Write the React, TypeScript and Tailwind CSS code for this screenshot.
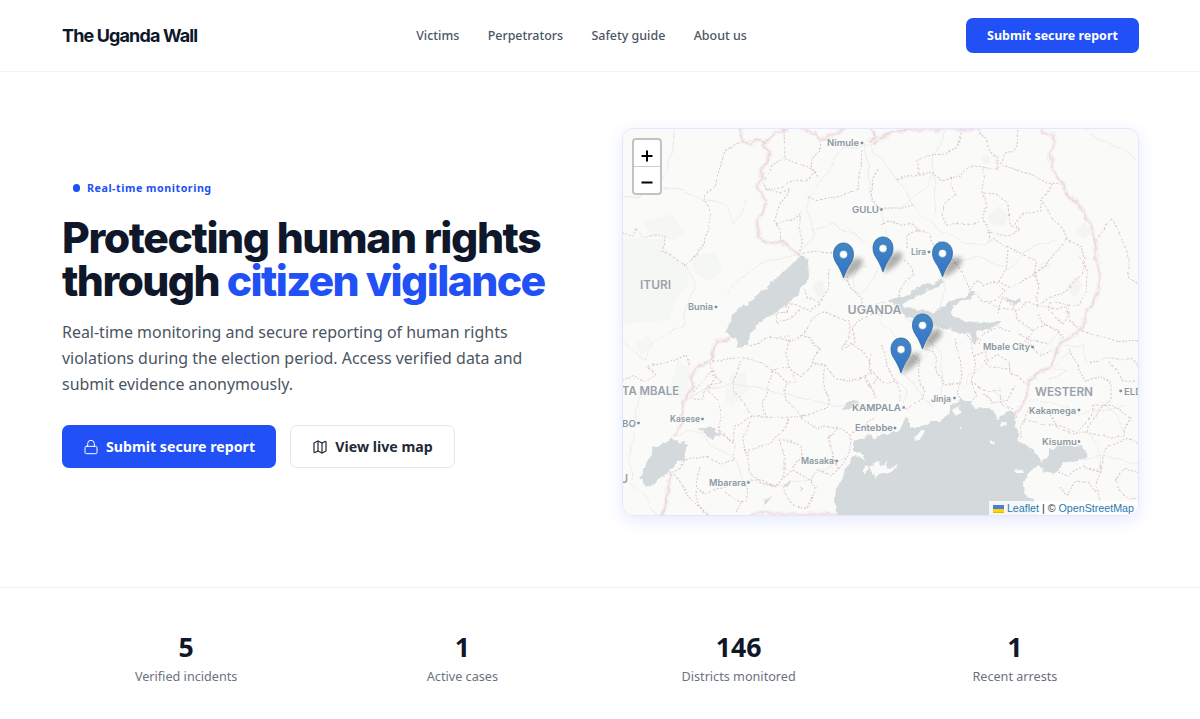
import React from 'react';
import { Lock, Map } from 'lucide-react';

const navLinks = ['Victims', 'Perpetrators', 'Safety guide', 'About us'];

const stats = [
  { value: '5', label: 'Verified incidents' },
  { value: '1', label: 'Active cases' },
  { value: '146', label: 'Districts monitored' },
  { value: '1', label: 'Recent arrests' },
];

const pins = [
  { x: 883, y: 272 },
  { x: 843.5, y: 278 },
  { x: 942.5, y: 277 },
  { x: 922.5, y: 349 },
  { x: 901, y: 373 },
];

// x is the left edge of the label, w the width it takes on the map
const places = [
  { name: 'Nimule', x: 827, y: 146, w: 32, size: 9, dot: [862, 143] },
  { name: 'GULU', x: 852, y: 213, w: 27, size: 9.5, dot: [881.5, 209.5] },
  { name: 'Lira', x: 911, y: 255, w: 15, size: 9, dot: [929, 252] },
  { name: 'Bunia', x: 688, y: 310, w: 25, size: 9, dot: [716, 307] },
  { name: 'Mbale City', x: 983, y: 350, w: 47, size: 9, dot: [1032.5, 347] },
  { name: 'Jinja', x: 931, y: 402, w: 20, size: 9, dot: [954.5, 398] },
  { name: 'KAMPALA', x: 852, y: 410.5, w: 49, size: 9.5, dot: [903.7, 407.5] },
  { name: 'Entebbe', x: 855, y: 431, w: 38, size: 9, dot: [895, 428] },
  { name: 'Kasese', x: 670, y: 422, w: 30, size: 9, dot: [702.5, 419] },
  { name: 'BO', x: 622, y: 426.5, w: 14, size: 9.5, dot: [638.5, 423] },
  { name: 'Masaka', x: 801, y: 463.5, w: 33, size: 9, dot: [836.7, 461] },
  { name: 'Mbarara', x: 709, y: 485.5, w: 37, size: 9, dot: [748.5, 482.5] },
  { name: 'Kakamega', x: 1029, y: 413.5, w: 47, size: 9, dot: [1079, 410] },
  { name: 'Kisumu', x: 1042, y: 444.5, w: 35, size: 9, dot: [1079, 441.5] },
  { name: 'ELD', x: 1124, y: 395, w: 18, size: 9.5, dot: [1120.7, 391] },
];

const regions = [
  { name: 'ITURI', x: 640, y: 289, w: 31 },
  { name: 'UGANDA', x: 847.5, y: 313.5, w: 54 },
  { name: 'TA MBALE', x: 622, y: 395, w: 57 },
  { name: 'WESTERN', x: 1035, y: 396, w: 58 },
  { name: 'U', x: 620, y: 482.5, w: 8 },
];

const countryBorders = [
  'M741 128L741 141L752 143L758 140L763 145L771 152L768 160L762 171L760 183L758 189L766 200L764 210L757 222L757 235L765 241L772 243L781 242L791 250L799 255',
  'M763 145L771 137L782 131L787 128',
  'M800 128L812 133L820 139L830 136L840 131L846 128',
  'M874 143L881 138L894 131L910 129L980 129',
  'M870 144L872 140L876 136L874 132L868 128',
  'M1040 128L1049 135L1054 136L1054 148L1050 153L1052 164L1056 177L1063 183L1067 196L1078 203L1084 214L1091 225L1095 240L1097 260L1099 274L1099 287L1095 301L1084 315L1084 325L1077 334L1061 341L1056 353L1049 368L1038 373L1027 384L1028 393L1022 405L1016 417',
  'M731 338L716 341L714 350L710 361L694 367L691 390L684 402L682 421L673 438',
  'M671 471L668 488L666 505L662 516',
  'M748 514L841 514',
];

const districts = [
  'M738 143L727 151L720 169L716 184L708 193L705 200L710 214L711 229L704 245L698 251L687 266',
  'M622 235L633 237L636 226L643 236L664 236L663 251L674 259L687 267',
  'M784 132L785 157L799 163L815 172L818 179',
  'M784 157L771 170L763 183L765 192L791 190L776 209L773 219L780 231L781 242',
  'M765 192L781 187L807 178L815 173',
  'M816 132L820 150L813 158L812 172',
  'M776 225L793 221L804 210M800 216L800 254',
  'M861 150L860 169L857 190L848 193L818 201L807 196',
  'M878 170L871 193L880 208L898 208L914 204',
  'M962 130L957 148L937 155L918 161L918 174L896 181M918 174L932 171L941 182L962 176L968 168L983 167L998 170L998 157L989 147L979 130',
  'M1018 130L1015 150L1004 153L1000 164L1014 170L1031 174L1047 183L1063 184',
  'M983 169L984 194L985 206L982 220L987 231L991 242M985 193L996 194L1009 203L1010 223L1020 231L1001 235L986 234',
  'M951 179L954 195L944 204L940 215L948 223L978 222',
  'M1051 184L1042 200L1040 212L1023 213L1016 224L1021 232M1042 200L1054 221L1068 237L1052 258L1037 274L1036 301',
  'M1067 237L1080 246L1087 259L1081 274L1067 288L1052 296L1036 304',
  'M994 239L1010 248L1035 259L1037 280',
  'M1100 236L1104 224L1110 219L1120 233L1126 256L1131 277L1139 287',
  'M1035 304L1058 309L1078 306L1087 290L1088 272L1080 254',
  'M881 226L888 221L910 224L918 231L929 234L935 246',
  'M907 248L907 235L919 230M903 262L913 272L905 284L899 300',
  'M939 240L954 260L964 275L970 291L982 301L997 299L1004 292L996 282L984 286L977 279L970 291',
  'M1009 250L1007 270L999 282L1011 288L1024 281L1036 275',
  'M799 254L814 251L827 255L840 251L848 251M848 276L849 290L862 299L864 308L885 302',
  'M829 270L827 289L818 301L807 298L806 289M788 311L791 302L809 311L819 302M789 311L775 312L776 323L788 321L800 310',
  'M770 336L788 341L801 336L810 320L824 311L838 318L848 322L850 337L842 348',
  'M751 345L774 337L788 337L786 350L792 367L802 375L812 363L819 349L810 336L802 334',
  'M792 366L771 370L762 363L739 357L723 363L711 361',
  'M770 370L783 380L796 382L794 371M770 370L768 391L763 402L766 418L752 417L742 404L734 393L733 378L740 361',
  'M811 363L826 367L836 378L847 382L864 378L871 389L876 399M871 365L878 378L869 387M826 367L823 383L829 397L825 408L801 416',
  'M787 382L785 401L801 416L780 418L752 416L748 427L744 442L748 457',
  'M712 363L715 376L709 392L718 400L722 417L718 435L732 443L735 426L752 416',
  'M709 374L721 381L708 388L701 400L691 397L707 376L714 370',
  'M718 433L735 445L734 460L721 465L708 457L697 456L687 460L675 473L683 486L691 502L702 511L707 515',
  'M786 419L782 432L771 443L759 444L749 450L749 470L761 483L775 487L784 474L784 460L781 439L802 445L803 456L791 469',
  'M744 480L762 480L773 486L787 475L791 470L810 479L815 487L813 502L808 510L794 505L786 493L784 487',
  'M694 491L697 505L705 515M700 467L695 488L707 494L724 488L726 479M724 493L740 501L746 500L745 485M736 513L741 502',
  'M801 417L818 430L838 426L849 434L850 452L837 469L831 476L820 469L811 480',
  'M838 427L829 439L833 456L837 469M874 417L866 427L850 432',
  'M622 381L634 374L643 382L655 373L647 366L663 363L675 361L686 356L690 367',
  'M842 349L856 341L851 330L864 317L882 316M851 341L860 348L871 361L871 375L864 378',
  'M882 344L886 365L896 381L900 401M871 354L870 371L884 383L896 380',
  'M910 351L918 358L919 380L924 390L921 400L908 408M919 344L932 352L937 371L944 385L960 382L962 361L954 338',
  'M960 382L956 396L969 406L979 394L972 381L974 354L966 334L954 331',
  'M974 356L984 352L988 362L998 355L1010 359L1011 375L1027 384M973 383L988 390L998 388L1001 402L1014 407',
  'M983 392L991 405L1010 398L1016 386M984 360L991 368L1011 369M980 344L983 334L1000 326L1013 332',
  'M997 314L1002 298L1009 303L1017 317L1033 330L1046 326L1058 330M990 301L1000 309L1014 311L1026 302L1038 306',
  'M1033 330L1024 342L1040 353L1052 351M1038 314L1044 326L1060 329L1065 341M1018 333L1031 343L1048 342',
  'M1051 302L1051 311L1063 323L1069 315L1065 305L1053 303M1070 306L1070 321L1080 331',
  'M1069 348L1078 365L1087 383L1102 377L1112 382L1112 397L1098 410L1089 432L1077 432L1062 427L1045 424L1024 420',
  'M1089 363L1105 358L1129 358L1139 367M1111 363L1121 378L1137 382M1082 331L1100 338L1124 340L1139 341',
  'M1042 407L1053 418L1060 430L1073 433L1089 422L1094 406L1112 405L1131 418L1124 435L1109 438L1088 432',
  'M1102 466L1096 482L1099 498L1109 514M1100 467L1108 446L1127 438L1139 447M1115 480L1123 468L1139 475M1116 477L1118 487L1128 499L1139 498',
  'M1056 470L1070 478L1084 466L1102 470M1060 487L1068 496L1077 484L1088 480L1096 493M1028 407L1022 431L1022 440',
];

const roads = [
  'M870 144L874 152L880 159L888 166L896 178L908 196L922 215L938 228L952 236L966 245L985 244L995 239',
  'M870 144L858 148L846 148L837 158L829 171L819 185L809 199L807 209L813 220L815 234L805 243L799 255',
  'M622 197L638 198L652 184L674 188L693 195L705 201L721 202L730 216L735 222L742 216L745 198',
  'M687 265L696 290L684 314L682 326L667 335L656 341L648 348L645 359L638 355L622 340',
  'M726 297L735 284L747 277L760 265L774 258L796 254',
  'M813 231L833 225L848 231L862 240L882 254L896 259',
  'M862 143L869 164L871 183L869 194L880 209L901 207L926 185L934 170',
  'M880 209L889 238L884 258L872 281L860 294L852 292L855 268L869 266',
  'M878 318L890 331L903 346L916 362L932 351L937 333L944 290L944 279',
  'M896 381L906 388L904 402M901 374L914 383L923 398L935 406',
  'M944 264L980 259L1010 269L1026 251L1055 238',
  'M1139 163L1123 149L1100 140L1085 128M672 130L673 154L667 169L658 184M945 130L944 141L931 158L936 185L934 214',
  'M692 395L728 383L758 388L800 398L835 405L876 406',
  'M673 438L690 430L704 434L713 447L731 455L745 481L780 486L812 478L845 457',
  'M646 388L636 407L634 438L629 458L631 480M630 483L645 497L654 510L660 515',
  'M903 318L918 324L920 342L932 340L940 354L942 382L944 405',
  'M1039 353L1050 340L1061 330M984 365L967 376L966 390M991 390L1006 400L1013 407M1089 432L1098 447L1100 470M1027 399L1051 403L1079 414L1124 407',
  'M1071 458L1088 459L1110 456L1139 465M1100 402L1117 415L1126 433M1070 350L1051 367L1067 372L1050 381M1060 346L1082 344L1086 363',
];

function Pin({ x, y }: { x: number; y: number }) {
  return (
    <g transform={`translate(${x} ${y})`}>
      <path d="M0 0L4 -12C8 -20 17 -22 19 -18C21 -14 15 -8 9 -4C5 -1 3 0 0 0Z" fill="#000" opacity="0.3" filter="url(#shadow)" />
      <path
        d="M0 -.2C-2 -6-4-10-7.4-15.2C-13-24.2-9-35-0-35C9-35 13-24.2 7.4-15.2C4-10 2-6 0 -.2Z"
        fill="url(#pin)"
        stroke="#2e6c97"
        strokeWidth="0.8"
      />
      <circle cy="-23.6" r="4" fill="#fff" stroke="#2e6c97" strokeWidth="0.5" />
    </g>
  );
}

function LiveMap() {
  return (
    <svg viewBox="622 128 517 388" className="block h-full w-full">
      <defs>
        <linearGradient id="pin" x1="0" y1="0" x2="0" y2="1">
          <stop offset="0" stopColor="#4287c5" />
          <stop offset="1" stopColor="#3474c9" />
        </linearGradient>
        <filter id="shadow" x="-50%" y="-50%" width="200%" height="200%">
          <feGaussianBlur stdDeviation="2.6" />
        </filter>
        {/* roughens straight segments into natural coast and border lines */}
        <filter id="rough" filterUnits="userSpaceOnUse" x="610" y="116" width="541" height="412">
          <feTurbulence type="fractalNoise" baseFrequency="0.11" numOctaves="3" seed="4" />
          <feDisplacementMap in="SourceGraphic" scale="7" xChannelSelector="R" yChannelSelector="G" />
        </filter>
        <filter id="wobble" filterUnits="userSpaceOnUse" x="610" y="116" width="541" height="412">
          <feTurbulence type="fractalNoise" baseFrequency="0.06" numOctaves="1" seed="9" />
          <feDisplacementMap in="SourceGraphic" scale="10" xChannelSelector="R" yChannelSelector="G" />
        </filter>
      </defs>

      <rect x="622" y="128" width="517" height="388" fill="#fafaf8" />

      <g fill="#f4f7f4">
        <path d="M622 239L664 239L667 255L687 267L689 283L675 302L670 320L622 324Z" />
        <path d="M644 222L672 214L684 232L675 241L651 236Z" />
        <path d="M692 256L716 252L723 270L709 281L694 273Z" />
        <path d="M636 343L650 335L654 347L641 355Z" />
        <path d="M730 376L745 371L749 389L733 407L724 400Z" />
        <path d="M678 360L691 370L684 400L667 398Z" />
      </g>
      <g fill="#f4f5f3">
        <path d="M982 157L989 155L990 163L983 164Z" />
        <path d="M812 284L822 280L827 293L817 297Z" />
        <path d="M987 217L999 206L1008 215L1005 226L991 224Z" />
        <path d="M1075 231L1084 222L1092 231L1085 239Z" />
        <path d="M1066 288L1075 276L1083 285L1075 297Z" />
        <path d="M1039 264L1047 260L1051 267L1042 271Z" />
      </g>

      <g fill="none" strokeLinejoin="round" filter="url(#wobble)">
        <g stroke="#ececeb" strokeWidth="1">
          {roads.map((d) => <path key={d} d={d} />)}
        </g>
        <g stroke="#dfc6cb" strokeWidth="1.1" strokeDasharray="2 1.7">
          {districts.map((d) => <path key={d} d={d} />)}
        </g>
      </g>
      <g fill="none" strokeLinejoin="round" filter="url(#rough)">
        <g stroke="#f5eced" strokeWidth="5" opacity="0.7">
          {countryBorders.map((d) => <path key={d} d={d} />)}
        </g>
        <g stroke="#ead6da" strokeWidth="1.2">
          {countryBorders.map((d) => <path key={d} d={d} />)}
        </g>
      </g>

      <g fill="#d4dadc" filter="url(#rough)">
        <path d="M801 255L808 260L809 277L803 287L790 302L783 307L771 316L757 323L750 337L743 349L738 347L735 338L725 332L730 323L734 313L741 308L757 297L770 283L790 267Z" />
        <path d="M673 439L679 443L687 446L685 459L670 470L659 478L655 484L647 487L641 477L648 460L653 447Z" />
        <path d="M698 429L704 429L710 426L720 433L714 439L707 437L706 432Z" />
        <path d="M887 301L897 297L904 297L910 292L920 288L928 282L932 284L941 279L944 282L937 287L927 290L920 295L910 300L904 305L913 309L930 312L943 308L949 302L957 299L966 297L970 291L974 291L972 298L961 302L954 306L951 313L956 318L967 321L980 323L1000 322L999 326L985 329L975 330L978 338L976 344L973 341L970 334L957 332L951 326L945 330L937 327L920 319L907 317L900 309L894 304Z" />
        <path d="M1006 297L1011 301L1020 299L1022 303L1014 305L1008 302Z" />
        <path d="M846 404L852 401L858 402L850 408L842 411Z" />
        <path d="M840 518L833 500L837 487L842 477L850 460L856 456L866 459L861 453L853 450L853 442L862 440L868 435L874 438L880 434L887 436L893 430L899 430L904 426L905 417L910 419L910 427L919 427L927 425L933 421L940 421L948 413L950 405L956 404L960 397L964 403L970 403L976 409L987 407L996 412L997 418L1003 416L1010 410L1017 413L1014 423L1019 435L1020 442L1026 445L1034 451L1041 461L1049 455L1049 447L1055 449L1060 444L1074 446L1082 445L1087 457L1074 462L1064 461L1057 470L1053 475L1044 472L1039 464L1032 471L1027 475L1023 483L1024 493L1034 500L1038 518Z" />
        <path d="M799 484L803 487L801 492M763 500L772 495L766 503M784 487L791 479L788 488" />
      </g>
      {/* islands */}
      <g fill="#fafaf8" filter="url(#rough)">
        <path d="M870 466L876 461L880 465L888 462L887 468L898 463L893 471L886 474L880 473L874 479L872 473Z" />
        <path d="M915 437L921 431L925 433L920 440L916 443Z" />
        <path d="M863 471L867 465L870 469L865 475Z" />
        <path d="M990 439L995 441L995 445L990 443Z" />
        <path d="M1014 470L1022 468L1024 472L1017 474Z" />
        <path d="M1000 424L1006 422L1007 426L1001 427Z" />
        <path d="M952 410L958 406L962 412L956 417Z" />
        <path d="M958 427L961 429L959 431Z" />
      </g>

      <g fontFamily="Inter, sans-serif" stroke="#fafaf8" strokeWidth="1.6" strokeOpacity="0.8" paintOrder="stroke">
        <g fill="#98a1aa" fontSize="11.3" fontWeight="600">
          {regions.map((r) => (
            <text key={r.name} x={r.x} y={r.y} textLength={r.w} lengthAdjust="spacingAndGlyphs">{r.name}</text>
          ))}
        </g>
        <g fill="#8c98a3" fontWeight="600">
          {places.map((p) => (
            <text key={p.name} x={p.x} y={p.y} fontSize={p.size} textLength={p.w} lengthAdjust="spacingAndGlyphs">{p.name}</text>
          ))}
        </g>
      </g>
      <g fill="#818c97">
        {places.map((p) => (
          <rect key={p.name} x={p.dot[0] - 1.2} y={p.dot[1] - 1.2} width="2.4" height="2.4" rx="0.4" />
        ))}
      </g>

      {pins.map((pin) => <Pin key={pin.x} {...pin} />)}
    </svg>
  );
}

function Header() {
  return (
    <header className="h-[72px] border-b border-[#f1f3f5]">
      <div className="ml-[62px] flex h-full w-[1077px] items-center justify-between">
        <a className="w-[135px] font-[Inter] text-[18px] font-bold tracking-[-0.87px] whitespace-nowrap text-[#0f172a]">The Uganda Wall</a>
        <nav className="flex gap-[28.4px] pt-0.5 text-[12.45px] font-medium text-[#4b5563]">
          {navLinks.map((link) => (
            <a key={link}>{link}</a>
          ))}
        </nav>
        <button className="h-[35px] w-[173px] rounded-[7px] bg-[#2050f6] pt-px text-[12.45px] font-bold text-white">
          Submit secure report
        </button>
      </div>
    </header>
  );
}

export default function App() {
  return (
    <div className="h-[719px] overflow-hidden bg-white font-['Noto_Sans',sans-serif]">
      <Header />

      <section className="h-[515px] pt-14">
        <div className="ml-[62px] grid w-[1077px] grid-cols-2 gap-[43px]">
          <div className="pt-[50px]">
            <div className="flex h-5 items-center gap-[7px] pl-[10.5px] text-[10.7px] font-bold tracking-[0.53px] text-[#2050f6]">
              <span className="h-[7.5px] w-[7.5px] rounded-full bg-[#2050f6]" />
              Real-time monitoring
            </div>
            <h1 className="mt-[18px] whitespace-nowrap font-[Inter] text-[42.7px] leading-[43px] font-extrabold text-[#0f172a]">
              <span className="block tracking-[-1.4px]">Protecting human rights</span>
              <span className="block tracking-[-1.6px]">
                through <span className="text-[#2050f6]">citizen vigilance</span>
              </span>
            </h1>
            <p className="mt-[17px] whitespace-nowrap text-[15.96px] leading-[26px] text-[#4b5563]">
              Real-time monitoring and secure reporting of human rights
              <br />
              violations during the election period. Access verified data and
              <br />
              submit evidence anonymously.
            </p>
            <div className="mt-[28px] flex gap-[14px] text-[14.2px] font-bold">
              <button className="flex h-[43px] w-[214px] items-center justify-center gap-[7px] rounded-[7px] bg-[#2050f6] text-white">
                <Lock size={16} strokeWidth={1.5} />
                Submit secure report
              </button>
              <button className="flex h-[43px] w-[165px] items-center justify-center gap-[7px] rounded-[7px] border border-[#e5e7eb] text-[#1f2937]">
                <Map size={16} strokeWidth={1.8} />
                View live map
              </button>
            </div>
          </div>

          <div className="relative h-[388px] overflow-hidden rounded-[11px] shadow-[0_4px_16px_rgba(32,80,246,0.12)]">
            <LiveMap />
            <div className="absolute top-[10px] left-[9.5px] w-[30px] rounded-[4px] border-2 border-[#c3c3c3] bg-white">
              <div className="flex h-[27px] items-center justify-center border-b border-[#ccc] pt-[5px]">
                <svg width="12" height="12" stroke="#000" strokeWidth="2"><path d="M0.5 6H11.5M6 0.5V11.5" /></svg>
              </div>
              <div className="flex h-[26px] items-center justify-center pt-[5px]">
                <svg width="12" height="12" stroke="#000" strokeWidth="2"><path d="M0.5 5.5H11.5" /></svg>
              </div>
            </div>
            <div className="absolute right-0 bottom-0 flex h-[15px] items-center bg-white/80 pr-[5px] pl-1 font-['Liberation_Sans'] text-[10.7px] whitespace-pre text-[#333]">
              <svg width="11" height="8" className="mr-[3px]">
                <path fill="#4c7be1" d="M0 0h11v4H0z" />
                <path fill="#ffd500" d="M0 4h11v3H0z" />
                <path fill="#e0bc00" d="M0 7h11v1H0z" />
              </svg>
              <span className="text-[#2a7ab0]">Leaflet</span> | © <span className="text-[#2a7ab0]">OpenStreetMap</span>
            </div>
            <div className="pointer-events-none absolute inset-0 rounded-[11px] border border-[#e3e7fb]" />
          </div>
        </div>
      </section>

      <section className="h-[132px] border-t border-[#f1f3f5] pt-[42px]">
        <div className="ml-[62px] grid w-[1077px] grid-cols-4 gap-x-7 text-center">
          {stats.map((stat) => (
            <div key={stat.label}>
              <div className="text-[26.7px] leading-[34px] font-bold text-[#0f172a]">{stat.value}</div>
              <div className="mt-[3px] text-[12.65px] leading-[18px] text-[#6b7280]">{stat.label}</div>
            </div>
          ))}
        </div>
      </section>
    </div>
  );
}
